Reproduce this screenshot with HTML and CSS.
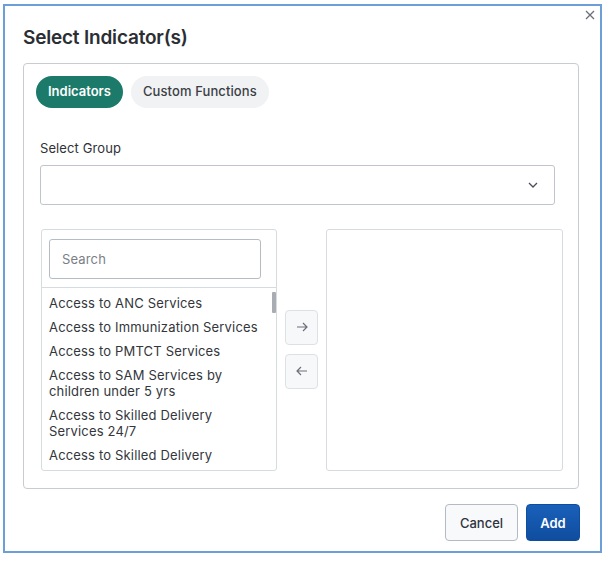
FILE: index.html
```html
<!DOCTYPE html>
<html lang="en">
<head>
<meta charset="utf-8">
<title>Select Indicator(s)</title>
<link rel="stylesheet" href="styles.css">
</head>
<body>
<div class="dialog">
  <button class="close" aria-label="Close">
    <svg width="10" height="10" viewBox="0 0 10 10"><path d="M1 1L9 9M9 1L1 9" stroke="#6b7078" stroke-width="1.3" fill="none"/></svg>
  </button>
  <h1 class="title">Select Indicator(s)</h1>
  <div class="panel">
    <div class="tabs">
      <span class="tab tab-active">Indicators</span>
      <span class="tab">Custom Functions</span>
    </div>
    <div class="form">
      <label class="label">Select Group</label>
      <div class="select">
        <svg width="10" height="6" viewBox="0 0 10 6"><path d="M1 1L5 5L9 1" stroke="#4a4f55" stroke-width="1.3" fill="none"/></svg>
      </div>
      <div class="transfer">
        <div class="box box-left">
          <div class="search-area">
            <div class="search">Search</div>
          </div>
          <div class="list">
            <div class="item">Access to ANC Services</div>
            <div class="item">Access to Immunization Services</div>
            <div class="item">Access to PMTCT Services</div>
            <div class="item">Access to SAM Services by children under 5 yrs</div>
            <div class="item">Access to Skilled Delivery Services 24/7</div>
            <div class="item">Access to Skilled Delivery</div>
            <div class="thumb"></div>
          </div>
        </div>
        <div class="moves">
          <button class="move">
            <svg width="12" height="10" viewBox="0 0 12 10"><path d="M1 5H11M7 1L11 5L7 9" stroke="#6b7078" stroke-width="1.2" fill="none"/></svg>
          </button>
          <button class="move">
            <svg width="12" height="10" viewBox="0 0 12 10"><path d="M11 5H1M5 1L1 5L5 9" stroke="#6b7078" stroke-width="1.2" fill="none"/></svg>
          </button>
        </div>
        <div class="box box-right"></div>
      </div>
    </div>
  </div>
  <div class="footer">
    <button class="btn btn-cancel">Cancel</button>
    <button class="btn btn-add">Add</button>
  </div>
</div>
</body>
</html>
```

FILE: styles.css
```css
* { box-sizing: border-box; }
html, body { margin: 0; padding: 0; background: #ffffff; }
body { font-family: Inter, "Noto Sans", "Liberation Sans", sans-serif; color: #33363b; }

.dialog {
  position: relative;
  margin: 4px 0 0 3px;
  width: 599px;
  height: 549px;
  border: 2px solid #6c9fd7;
  padding: 20px 21px 0 18px;
  background: #fff;
}
.close {
  position: absolute;
  top: 3px;
  right: 4px;
  width: 12px;
  height: 12px;
  padding: 0;
  border: 0;
  background: transparent;
  display: flex;
  align-items: center;
  justify-content: center;
}
.title {
  margin: 0;
  font-size: 19px;
  line-height: 24px;
  font-weight: 600;
  color: #2b2e33;
  letter-spacing: -0.2px;
}
.panel {
  margin-top: 13px;
  height: 426px;
  border: 1px solid #c7ccd2;
  border-radius: 4px;
  padding: 12px 0 0 12px;
}
.tabs { display: flex; gap: 8px; }
.tab {
  height: 32px;
  padding: 0 12px;
  border-radius: 16px;
  background: #f1f2f4;
  color: #3b3f45;
  font-size: 13px;
  font-weight: 500;
  letter-spacing: 0.1px;
  display: flex;
  align-items: center;
  padding-bottom: 2px;
}
.tab-active {
  background: #1b7a69;
  color: #fff;
  font-weight: 600;
  letter-spacing: 0;
}
.form { padding-left: 4px; }
.label {
  display: block;
  margin-top: 32px;
  font-size: 13px;
  line-height: 16px;
  color: #2f3237;
  letter-spacing: 0.1px;
}
.select {
  margin-top: 9px;
  width: 515px;
  height: 40px;
  border: 1px solid #bfc5cc;
  border-radius: 3px;
  display: flex;
  align-items: center;
  justify-content: flex-end;
  padding-right: 16px;
}
.transfer {
  margin-top: 24px;
  display: flex;
  align-items: center;
  gap: 8px;
  padding-left: 1px;
}
.box {
  height: 242px;
  border: 1px solid #d6dbe0;
  border-radius: 3px;
}
.box-left { width: 236px; display: flex; flex-direction: column; overflow: hidden; }
.box-right { width: 237px; }
.search-area {
  padding: 9px 15px 8px 7px;
  border-bottom: 1px solid #d6dbe0;
}
.search {
  height: 40px;
  border: 1px solid #b6bcc4;
  border-radius: 3px;
  padding-left: 12px;
  display: flex;
  align-items: center;
  font-size: 13px;
  color: #7b8087;
  letter-spacing: 0.15px;
}
.list {
  position: relative;
  flex: 1;
  overflow: hidden;
  padding-top: 3px;
}
.item {
  padding: 4px 12px 4px 7px;
  font-size: 13px;
  line-height: 16px;
  color: #33363b;
  letter-spacing: 0.17px;
}
.thumb {
  position: absolute;
  top: 4px;
  right: 0;
  width: 4px;
  height: 21px;
  background: #a9adb3;
  border-radius: 1px;
}
.moves { display: flex; flex-direction: column; gap: 9px; margin-top: -2px; }
.move {
  width: 33px;
  height: 35px;
  padding: 0;
  border: 1px solid #dde1e6;
  border-radius: 4px;
  background: #f7f8fa;
  display: flex;
  align-items: center;
  justify-content: center;
}
.footer {
  margin-top: 15px;
  display: flex;
  justify-content: flex-end;
  gap: 8px;
  margin-right: -1px;
}
.btn {
  height: 37px;
  border-radius: 4px;
  font-family: inherit;
  font-size: 13px;
  padding: 0;
  display: flex;
  align-items: center;
  justify-content: center;
}
.btn-cancel {
  width: 73px;
  background: #f8f9fa;
  border: 1px solid #b3bac3;
  color: #2d3340;
  font-weight: 500;
}
.btn-add {
  width: 54px;
  background: linear-gradient(#1a60ba, #0f4d9f);
  border: 1px solid #0f4d9f;
  color: #fff;
  font-weight: 600;
}
```
